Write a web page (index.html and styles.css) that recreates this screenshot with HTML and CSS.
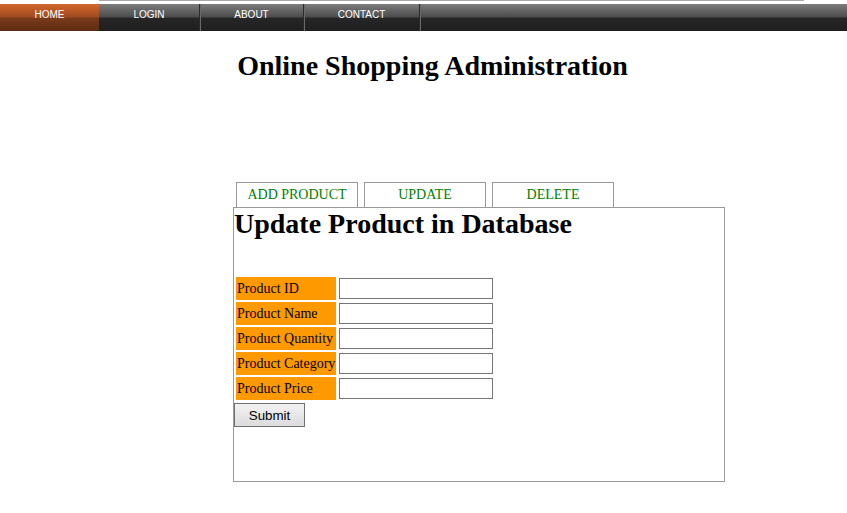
FILE: index.html
```html
<!DOCTYPE html>
<html>
<head>
<meta charset="utf-8">
<title>Online Shopping Administration</title>
<link rel="stylesheet" href="styles.css">
</head>
<body>
<div class="topline"></div>
<nav class="nav">
  <a class="nav-item home" href="#">HOME</a>
  <a class="nav-item login" href="#">LOGIN</a>
  <a class="nav-item about" href="#">ABOUT</a>
  <a class="nav-item contact" href="#">CONTACT</a>
</nav>
<h1 class="title">Online Shopping Administration</h1>
<div class="panel">
  <div class="tabs">
    <a class="tab" href="#">ADD PRODUCT</a>
    <a class="tab" href="#">UPDATE</a>
    <a class="tab" href="#">DELETE</a>
  </div>
  <div class="box">
    <h1 class="box-title">Update Product in Database</h1>
    <form class="form">
      <table class="form-table">
        <tr><td class="label">Product ID</td><td class="field"><input type="text"></td></tr>
        <tr><td class="label">Product Name</td><td class="field"><input type="text"></td></tr>
        <tr><td class="label">Product Quantity</td><td class="field"><input type="text"></td></tr>
        <tr><td class="label">Product Category</td><td class="field"><input type="text"></td></tr>
        <tr><td class="label">Product Price</td><td class="field"><input type="text"></td></tr>
      </table>
      <button type="button" class="submit">Submit</button>
    </form>
  </div>
</div>
</body>
</html>
```
FILE: styles.css
```css
html, body {
  margin: 0;
  padding: 0;
  background: #fff;
}
body {
  font-family: "Liberation Serif", "Times New Roman", serif;
  color: #000;
}
.topline {
  margin-left: 99px;
  width: 705px;
  height: 1px;
  background: #a9a9a9;
  margin-bottom: 3px;
}
.nav {
  display: flex;
  height: 27px;
  background: linear-gradient(to bottom, #7c7c7c 0px, #5e5e5e 8px, #4c4c4c 13px, #262626 14px, #1f1f1f 27px);
}
.nav-item {
  display: flex;
  align-items: center;
  justify-content: center;
  height: 27px;
  box-sizing: border-box;
  padding-bottom: 6px;
  font-family: "Liberation Sans", Arial, sans-serif;
  font-size: 10px;
  color: #fff;
  text-decoration: none;
  border-right: 1px solid #2a2a2a;
  box-shadow: 1px 0 0 #6a6a6a;
}
.home {
  width: 99px;
  background: linear-gradient(to bottom, #d0692f 0px, #b45424 8px, #a04a20 13px, #7a3a1a 14px, #5c2c14 27px);
  border-right: none;
  box-shadow: none;
}
.login { width: 101px; }
.about { width: 104px; }
.contact { width: 116px; }
.title {
  margin: 19px 0 0 0;
  padding-left: 18px;
  text-align: center;
  font-size: 28px;
  font-weight: bold;
  line-height: 31px;
}
.panel {
  margin: 101px 0 0 233px;
  width: 492px;
}
.tabs {
  display: flex;
  gap: 6px;
  padding-left: 3px;
}
.tab {
  width: 122px;
  box-sizing: border-box;
  border: 1px solid #999;
  border-bottom: none;
  height: 25px;
  line-height: 24px;
  text-align: center;
  color: #008000;
  font-size: 14px;
  text-decoration: none;
}
.box {
  border: 1px solid #999;
  height: 273px;
}
.box-title {
  margin: 0;
  font-size: 28px;
  font-weight: bold;
  line-height: 31px;
}
.form {
  margin-top: 36px;
}
.form-table {
  border-collapse: separate;
  border-spacing: 2px;
}
.form-table td {
  padding: 1px;
  font-size: 14px;
}
.label {
  width: 98px;
  height: 21px;
  background: #ff9900;
  white-space: nowrap;
}
.field input {
  display: block;
  width: 154px;
  height: 21px;
  box-sizing: border-box;
  border: 1px solid #767676;
  padding: 1px 2px;
  margin: 0;
}
.submit {
  display: block;
  width: 71px;
  height: 24px;
  box-sizing: border-box;
  margin: 1px 0 0 0;
  padding: 0;
  border: 1px solid #707070;
  background: linear-gradient(to bottom, #f2f2f2, #dcdcdc);
  font-family: "Liberation Sans", Arial, sans-serif;
  font-size: 13.33px;
  color: #000;
}
```
